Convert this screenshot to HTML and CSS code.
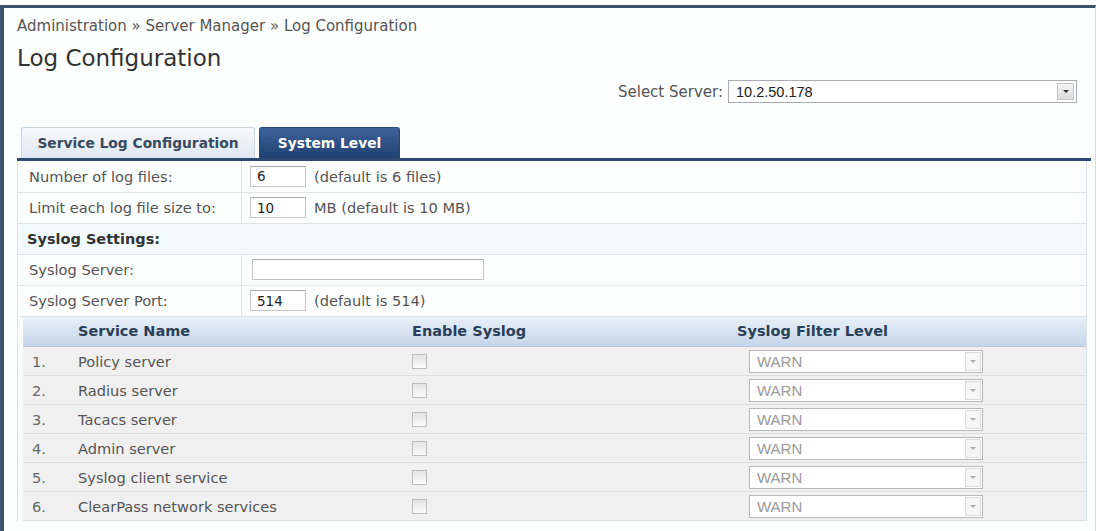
FILE: index.html
```html
<!DOCTYPE html>
<html lang="en">
  <head>
    <meta charset="UTF-8" />
    <title>Log Configuration</title>
    <link rel="stylesheet" href="styles.css">
  </head>
  <body>
    <div class="frame">
      <div class="breadcrumb">Administration &raquo; Server Manager &raquo; Log Configuration</div>
      <h1 class="title">Log Configuration</h1>

      <div class="server-row">
        <span class="server-label">Select Server:</span>
        <div class="select server-select">
          <span class="select-value">10.2.50.178</span>
          <span class="select-arrow"><span class="caret"></span></span>
        </div>
      </div>

      <div class="tabs">
        <div class="tab">Service Log Configuration</div>
        <div class="tab active">System Level</div>
      </div>

      <table class="form">
        <tr>
          <td class="label">Number of log files:</td>
          <td><input type="text" class="small-input" value="6" /><span class="hint">(default is 6 files)</span></td>
        </tr>
        <tr>
          <td class="label">Limit each log file size to:</td>
          <td><input type="text" class="small-input" value="10" /><span class="hint">MB (default is 10 MB)</span></td>
        </tr>
        <tr class="section">
          <td colspan="2">Syslog Settings:</td>
        </tr>
        <tr>
          <td class="label">Syslog Server:</td>
          <td><input type="text" class="wide-input" value="" /></td>
        </tr>
        <tr>
          <td class="label">Syslog Server Port:</td>
          <td><input type="text" class="small-input" value="514" /><span class="hint">(default is 514)</span></td>
        </tr>
        <tr class="nested">
          <td colspan="2">
            <table class="services">
              <thead>
                <tr>
                  <th class="col-num"></th>
                  <th class="col-name">Service Name</th>
                  <th class="col-enable">Enable Syslog</th>
                  <th class="col-level">Syslog Filter Level</th>
                </tr>
              </thead>
              <tbody>
                <tr>
                  <td class="col-num">1.</td>
                  <td class="col-name">Policy server</td>
                  <td class="col-enable"><input type="checkbox" disabled /></td>
                  <td class="col-level"><div class="select level-select"><span class="select-value">WARN</span><span class="select-arrow"><span class="caret"></span></span></div></td>
                </tr>
                <tr>
                  <td class="col-num">2.</td>
                  <td class="col-name">Radius server</td>
                  <td class="col-enable"><input type="checkbox" disabled /></td>
                  <td class="col-level"><div class="select level-select"><span class="select-value">WARN</span><span class="select-arrow"><span class="caret"></span></span></div></td>
                </tr>
                <tr>
                  <td class="col-num">3.</td>
                  <td class="col-name">Tacacs server</td>
                  <td class="col-enable"><input type="checkbox" disabled /></td>
                  <td class="col-level"><div class="select level-select"><span class="select-value">WARN</span><span class="select-arrow"><span class="caret"></span></span></div></td>
                </tr>
                <tr>
                  <td class="col-num">4.</td>
                  <td class="col-name">Admin server</td>
                  <td class="col-enable"><input type="checkbox" disabled /></td>
                  <td class="col-level"><div class="select level-select"><span class="select-value">WARN</span><span class="select-arrow"><span class="caret"></span></span></div></td>
                </tr>
                <tr>
                  <td class="col-num">5.</td>
                  <td class="col-name">Syslog client service</td>
                  <td class="col-enable"><input type="checkbox" disabled /></td>
                  <td class="col-level"><div class="select level-select"><span class="select-value">WARN</span><span class="select-arrow"><span class="caret"></span></span></div></td>
                </tr>
                <tr>
                  <td class="col-num">6.</td>
                  <td class="col-name">ClearPass network services</td>
                  <td class="col-enable"><input type="checkbox" disabled /></td>
                  <td class="col-level"><div class="select level-select"><span class="select-value">WARN</span><span class="select-arrow"><span class="caret"></span></span></div></td>
                </tr>
              </tbody>
            </table>
          </td>
        </tr>
      </table>
    </div>
  </body>
</html>
```

FILE: styles.css
```css
* {
  box-sizing: border-box;
}

body {
  margin: 0;
  background: #ffffff;
  font-family: "DejaVu Sans", Verdana, sans-serif;
  color: #4a4a4a;
}

.frame {
  margin-top: 5px;
  height: 526px;
  padding: 10px 4px 0 13px;
  background: #fdfefe;
  border-top: 3px solid #3b536d;
  border-left: 4px solid #3b536d;
  border-right: 1px solid #d3dce5;
}

.breadcrumb {
  font-size: 15px;
  line-height: 16px;
  color: #555;
}

.title {
  margin: 11px 0 0 0;
  font-size: 23px;
  line-height: 26px;
  font-weight: normal;
  color: #333;
}

.server-row {
  margin-top: 9px;
  margin-right: 14px;
  display: flex;
  justify-content: flex-end;
  align-items: center;
  gap: 5px;
}

.server-label {
  font-size: 15px;
  color: #555;
}

/* fake select boxes */
.select {
  display: flex;
  align-items: stretch;
  background: #fff;
  border: 1px solid #a9adb2;
}

.select-value {
  flex: 1;
  padding-left: 7px;
  font-family: "Liberation Sans", Arial, sans-serif;
  display: flex;
  align-items: center;
}

.select-arrow {
  width: 17px;
  margin: 2px;
  display: flex;
  justify-content: center;
  align-items: center;
  background: linear-gradient(#f4f4f4, #dcdcdc);
  border: 1px solid #c4c4c4;
}

.caret {
  width: 0;
  height: 0;
  border-left: 3px solid transparent;
  border-right: 3px solid transparent;
  border-top: 3px solid #333;
}

.server-select {
  width: 349px;
  height: 23px;
}

.server-select .select-value {
  font-size: 14.5px;
  color: #222;
}

.tabs {
  margin-top: 24px;
  padding-left: 4px;
  display: flex;
  gap: 4px;
  border-bottom: 3px solid #2c4a72;
}

.tab {
  height: 31px;
  line-height: 30px;
  text-align: center;
  font-size: 13.8px;
  font-weight: bold;
  color: #3a4a5e;
  width: 234px;
  border: 1px solid #c8d3de;
  border-bottom: none;
  border-radius: 3px 3px 0 0;
  background: linear-gradient(#f7f9fc, #dfe7f0);
}

.tab.active {
  width: 141px;
  color: #fff;
  border-color: #26477a;
  background: linear-gradient(#3d6299, #1f4271);
}

.form {
  width: 1070px;
  border-collapse: collapse;
  border-left: 1px solid #dde2e6;
  border-right: 1px solid #dde2e6;
  font-size: 14.6px;
}

.form > tbody > tr > td {
  height: 31px;
  padding: 0 0 0 8px;
  border-bottom: 1px solid #e1e4e7;
  color: #555;
}

.form .label {
  width: 224px;
  padding-left: 11px;
  border-right: 1px solid #e1e4e7;
}

.form .section td {
  font-weight: bold;
  font-size: 14.5px;
  color: #333;
  padding-left: 9px;
  background: #f2fafc;
}

.small-input,
.wide-input {
  height: 21px;
  padding: 0 6px;
  font-family: "DejaVu Sans", Verdana, sans-serif;
  font-size: 13.5px;
  color: #222;
  background: #fff;
  border: 1px solid #c5c5c5;
  border-top-color: #a9a9a9;
  vertical-align: middle;
}

.small-input {
  width: 56px;
}

.wide-input {
  width: 232px;
  margin-left: 2px;
}

.hint {
  margin-left: 8px;
  vertical-align: middle;
}

.form .nested > td {
  height: auto;
  padding: 0 0 0 5px;
  border-bottom: none;
}

.services {
  width: 100%;
  border-collapse: collapse;
  font-size: 14.6px;
}

.services th {
  height: 30px;
  padding: 0;
  text-align: left;
  font-size: 14.5px;
  font-weight: bold;
  color: #2b3f58;
  background: linear-gradient(#e9f0f8, #c5d6ea);
  border-bottom: 1px solid #b9c9db;
}

.services td {
  height: 29px;
  padding: 0;
  color: #555;
  background: #f0f0f0;
  border-bottom: 1px solid #dedede;
}

.services .col-num {
  width: 55px;
  padding-left: 9px;
  color: #666;
}

.services .col-name {
  width: 334px;
}

.services .col-enable {
  width: 325px;
}

.services td.col-enable {
  padding-top: 3px;
}

.services .col-level {
  padding-left: 12px;
}

.services th.col-level {
  padding-left: 0;
}

.services input[type="checkbox"] {
  appearance: none;
  width: 15px;
  height: 15px;
  margin: 0;
  border: 1px solid #bdbdbd;
  background: linear-gradient(#e4e4e4, #fafafa);
}

.level-select {
  width: 234px;
  height: 23px;
  border-color: #b8b8b8;
}

.level-select .select-value {
  font-size: 15px;
  color: #9a9a9a;
}

.level-select .select-arrow {
  width: 16px;
  margin: 1px;
  background: #f6f6f6;
  border: 1px solid #dcdcdc;
}

.level-select .caret {
  border-top-color: #aaa;
}
```
